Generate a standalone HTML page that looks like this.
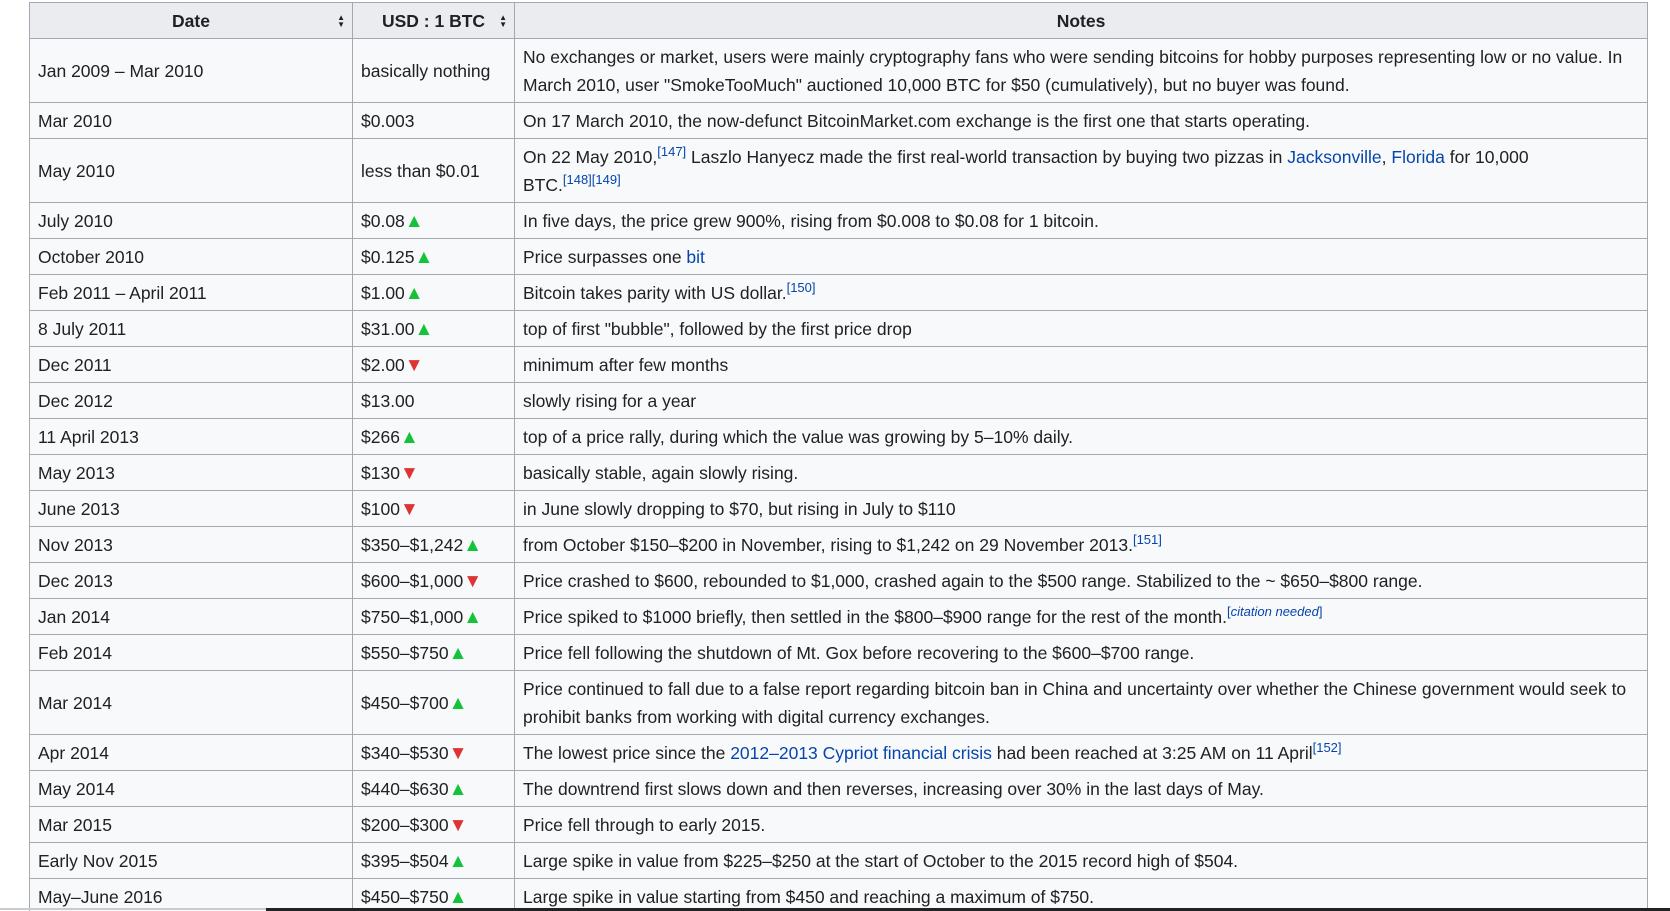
<!DOCTYPE html>
<html><head><meta charset="utf-8"><style>
html,body{margin:0;padding:0;background:#fff;width:1670px;height:911px;overflow:hidden}
body{font-family:"Liberation Sans",Arial,sans-serif;font-size:17.5px;color:#202122}
#w{position:relative;width:1670px;height:911px;overflow:hidden}
table{position:absolute;left:29px;top:2px;border-collapse:collapse;background:#f8f9fa;table-layout:fixed;width:1618px}
td,th{border:1px solid #a2a9b1;padding:0 8px;vertical-align:middle;line-height:28px;overflow:hidden;white-space:normal}
th{background:#eaecf0;font-weight:bold;text-align:center;position:relative}
th .s{position:absolute;right:7px;top:11px;font-size:8px;line-height:7px}
tr{height:36px}
tr.d{height:64px}
a{color:#0645ad;text-decoration:none}
sup{font-size:13px;line-height:0;color:#0645ad}
.u{color:#14c33a;font-size:19px;line-height:0}
.n{color:#dd3333;font-size:19px;line-height:0}
.u::after{content:"\25B2"}
.n::after{content:"\25BC"}
</style></head><body><div id="w">
<table>
<colgroup><col style="width:323px"><col style="width:162px"><col style="width:1133px"></colgroup>
<tr><th>Date<span class="s">&#9650;<br>&#9660;</span></th><th>USD : 1 BTC<span class="s">&#9650;<br>&#9660;</span></th><th>Notes</th></tr>
<tr class="d"><td>Jan 2009 – Mar 2010</td><td>basically nothing</td><td>No exchanges or market, users were mainly cryptography fans who were sending bitcoins for hobby purposes representing low or no value. In March 2010, user "SmokeTooMuch" auctioned 10,000 BTC for $50 (cumulatively), but no buyer was found.</td></tr>
<tr><td>Mar 2010</td><td>$0.003</td><td>On 17 March 2010, the now-defunct BitcoinMarket.com exchange is the first one that starts operating.</td></tr>
<tr class="d"><td>May 2010</td><td>less than $0.01</td><td>On 22 May 2010,<sup>[147]</sup> Laszlo Hanyecz made the first real-world transaction by buying two pizzas in <a>Jacksonville</a>, <a>Florida</a> for 10,000<br>BTC.<sup>[148][149]</sup></td></tr>
<tr><td>July 2010</td><td>$0.08<span class="u"></span></td><td>In five days, the price grew 900%, rising from $0.008 to $0.08 for 1 bitcoin.</td></tr>
<tr><td>October 2010</td><td>$0.125<span class="u"></span></td><td>Price surpasses one <a>bit</a></td></tr>
<tr><td>Feb 2011 – April 2011</td><td>$1.00<span class="u"></span></td><td>Bitcoin takes parity with US dollar.<sup>[150]</sup></td></tr>
<tr><td>8 July 2011</td><td>$31.00<span class="u"></span></td><td>top of first "bubble", followed by the first price drop</td></tr>
<tr><td>Dec 2011</td><td>$2.00<span class="n"></span></td><td>minimum after few months</td></tr>
<tr><td>Dec 2012</td><td>$13.00</td><td>slowly rising for a year</td></tr>
<tr><td>11 April 2013</td><td>$266<span class="u"></span></td><td>top of a price rally, during which the value was growing by 5–10% daily.</td></tr>
<tr><td>May 2013</td><td>$130<span class="n"></span></td><td>basically stable, again slowly rising.</td></tr>
<tr><td>June 2013</td><td>$100<span class="n"></span></td><td>in June slowly dropping to $70, but rising in July to $110</td></tr>
<tr><td>Nov 2013</td><td>$350–$1,242<span class="u"></span></td><td>from October $150–$200 in November, rising to $1,242 on 29 November 2013.<sup>[151]</sup></td></tr>
<tr><td>Dec 2013</td><td>$600–$1,000<span class="n"></span></td><td>Price crashed to $600, rebounded to $1,000, crashed again to the $500 range. Stabilized to the ~ $650–$800 range.</td></tr>
<tr><td>Jan 2014</td><td>$750–$1,000<span class="u"></span></td><td>Price spiked to $1000 briefly, then settled in the $800–$900 range for the rest of the month.<sup>[<i>citation needed</i>]</sup></td></tr>
<tr><td>Feb 2014</td><td>$550–$750<span class="u"></span></td><td>Price fell following the shutdown of Mt. Gox before recovering to the $600–$700 range.</td></tr>
<tr class="d"><td>Mar 2014</td><td>$450–$700<span class="u"></span></td><td>Price continued to fall due to a false report regarding bitcoin ban in China and uncertainty over whether the Chinese government would seek to prohibit banks from working with digital currency exchanges.</td></tr>
<tr><td>Apr 2014</td><td>$340–$530<span class="n"></span></td><td>The lowest price since the <a>2012–2013 Cypriot financial crisis</a> had been reached at 3:25 AM on 11 April<sup>[152]</sup></td></tr>
<tr><td>May 2014</td><td>$440–$630<span class="u"></span></td><td>The downtrend first slows down and then reverses, increasing over 30% in the last days of May.</td></tr>
<tr><td>Mar 2015</td><td>$200–$300<span class="n"></span></td><td>Price fell through to early 2015.</td></tr>
<tr><td>Early Nov 2015</td><td>$395–$504<span class="u"></span></td><td>Large spike in value from $225–$250 at the start of October to the 2015 record high of $504.</td></tr>
<tr><td>May–June 2016</td><td>$450–$750<span class="u"></span></td><td>Large spike in value starting from $450 and reaching a maximum of $750.</td></tr>
</table>
<div style="position:absolute;left:0;top:908px;width:266px;height:2px;background:#c8ccd1"></div>
<div style="position:absolute;left:266px;top:908px;width:1404px;height:3px;background:#222"></div>
</div></body></html>
